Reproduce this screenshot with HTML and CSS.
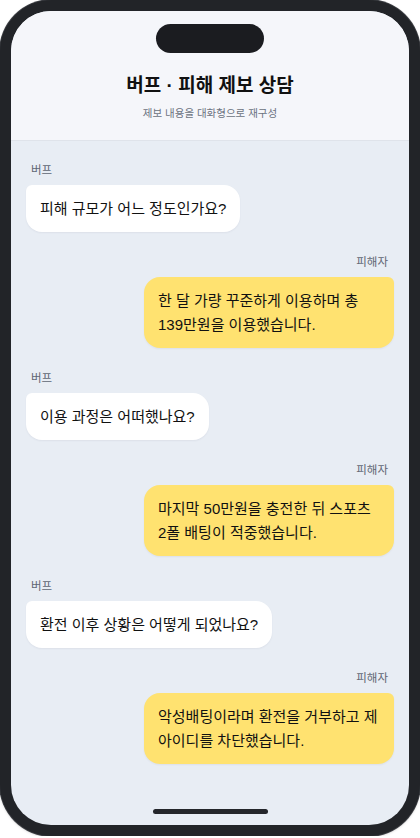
FILE: index.html
```html
<!DOCTYPE html>
<html lang="ko">
<head>
<meta charset="utf-8">
<title>버프 · 피해 제보 상담</title>
<link rel="stylesheet" href="styles.css">
</head>
<body>
<div class="phone">
  <div class="screen">
    <div class="island"></div>
    <header class="header">
      <h1 class="title">버프 · 피해 제보 상담</h1>
      <p class="subtitle">제보 내용을 대화형으로 재구성</p>
    </header>
    <main class="chat">
      <div class="msg left">
        <div class="name">버프</div>
        <div class="bubble">피해 규모가 어느 정도인가요?</div>
      </div>
      <div class="msg right">
        <div class="name">피해자</div>
        <div class="bubble">한 달 가량 꾸준하게 이용하며 총 139만원을 이용했습니다.</div>
      </div>
      <div class="msg left">
        <div class="name">버프</div>
        <div class="bubble">이용 과정은 어떠했나요?</div>
      </div>
      <div class="msg right">
        <div class="name">피해자</div>
        <div class="bubble">마지막 50만원을 충전한 뒤 스포츠 2폴 배팅이 적중했습니다.</div>
      </div>
      <div class="msg left">
        <div class="name">버프</div>
        <div class="bubble">환전 이후 상황은 어떻게 되었나요?</div>
      </div>
      <div class="msg right">
        <div class="name">피해자</div>
        <div class="bubble">악성배팅이라며 환전을 거부하고 제 아이디를 차단했습니다.</div>
      </div>
    </main>
    <div class="home-bar"></div>
  </div>
</div>
</body>
</html>
```
FILE: styles.css
```css
* { box-sizing: border-box; }
html, body {
  margin: 0;
  padding: 0;
  background: #ffffff;
}
body {
  font-family: "Liberation Sans", "Noto Sans CJK KR", sans-serif;
  color: #111111;
}
.phone {
  width: 420px;
  height: 836px;
  border: 11px solid #222428;
  border-radius: 52px;
  background: #222428;
  box-shadow: 0 0 0 1px #3b3d42, 0 1px 3px rgba(0,0,0,0.25);
}
.screen {
  position: relative;
  height: 100%;
  border-radius: 40px;
  overflow: hidden;
  background: #e8edf4;
  display: flex;
  flex-direction: column;
}
.island {
  position: absolute;
  top: 13px;
  left: 145px;
  width: 108px;
  height: 29px;
  border-radius: 15px;
  background: #1b1c20;
}
.header {
  background: #f5f6fa;
  border-bottom: 1px solid #dfe3ea;
  padding: 62px 0 20px;
  text-align: center;
}
.title {
  margin: 0;
  font-size: 19px;
  line-height: 26px;
  font-weight: 700;
  color: #111111;
}
.subtitle {
  margin: 7px 0 0;
  font-size: 10.5px;
  line-height: 14px;
  color: #6b7280;
}
.chat {
  flex: 1;
  padding: 21px 15px 0;
  display: flex;
  flex-direction: column;
  gap: 22px;
}
.msg {
  display: flex;
  flex-direction: column;
}
.msg.left { align-items: flex-start; }
.msg.right { align-items: flex-end; }
.name {
  font-size: 11.5px;
  line-height: 16px;
  color: #5f6673;
  margin-bottom: 7px;
  padding: 0 5px;
}
.msg.right .name { padding: 0 6px; }
.bubble {
  max-width: 250px;
  padding: 11.5px 14px;
  font-size: 15px;
  line-height: 24px;
  border-radius: 16px;
  word-break: keep-all;
  box-shadow: 0 1px 2px rgba(30, 40, 60, 0.06);
}
.msg.left .bubble {
  background: #ffffff;
  border-top-left-radius: 6px;
}
.msg.right .bubble {
  background: #ffe270;
  border-top-right-radius: 6px;
}
.home-bar {
  position: absolute;
  left: 142px;
  bottom: 11px;
  width: 115px;
  height: 5px;
  border-radius: 3px;
  background: #24262b;
}
```
